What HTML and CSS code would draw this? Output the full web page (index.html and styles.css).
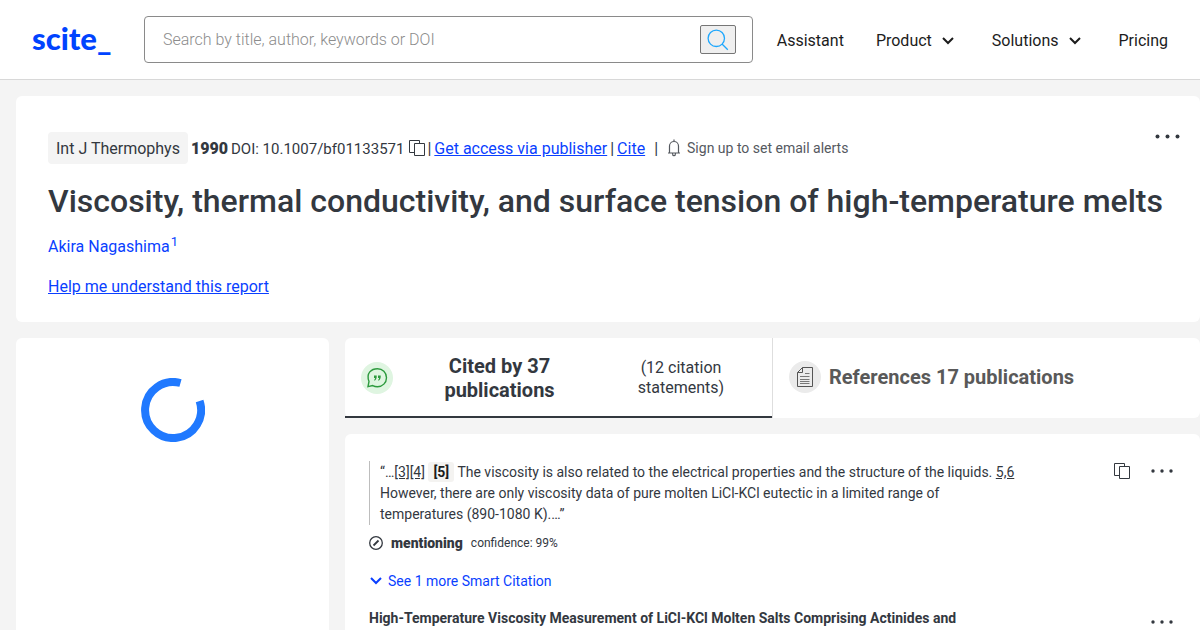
FILE: index.html
```html
<!DOCTYPE html>
<html lang="en">
<head>
    <meta charset="UTF-8">
    <meta name="viewport" content="width=device-width, initial-scale=1.0">
    <title>Viscosity, thermal conductivity, and surface tension of high-temperature melts - scite</title>
    <link rel="stylesheet" href="styles.css">
</head>
<body>
    <header class="header">
        <a class="logo" href="#">scite_</a>
        <form class="search">
            <input class="search-input" type="text" aria-label="Search" placeholder="Search by title, author, keywords or DOI">
            <button class="search-button" type="submit" aria-label="Search">
                <svg width="22" height="22" viewBox="0 0 22 22" fill="none" stroke="#1ea7fd" stroke-width="1.3">
                    <circle cx="9.3" cy="9.3" r="8.2"/>
                    <path d="M15 15l5.800 5.800"/>
                </svg>
            </button>
        </form>
        <nav class="nav">
            <a href="#">Assistant</a>
            <button type="button">Product
                <svg width="12" height="8" viewBox="0 0 12 8" fill="none" stroke="currentColor" stroke-width="2"><path d="M1 1l5 5 5-5"/></svg>
            </button>
            <button type="button">Solutions
                <svg width="12" height="8" viewBox="0 0 12 8" fill="none" stroke="currentColor" stroke-width="2"><path d="M1 1l5 5 5-5"/></svg>
            </button>
            <a href="#">Pricing</a>
        </nav>
    </header>

    <main class="page">
        <section class="card report">
            <div class="report-top">
                <div class="meta">
                    <span class="journal">Int J Thermophys</span>
                    <strong>1990</strong>
                    <span class="doi">DOI: 10.1007/bf01133571</span>
                    <button class="icon-button copy-doi" type="button" aria-label="Copy DOI">
                        <svg width="17" height="16" viewBox="0 0 17 16" fill="none" stroke="currentColor"><path d="M5.500 12.500H.5V.5h10v3"/><path d="M5.500 3.500h10v12h-10z" fill="#fff"/></svg>
                    </button>
                    <span>|</span>
                    <a href="#">Get access via publisher</a>
                    <span>|</span>
                    <a href="#">Cite</a>
                    <span class="divider">|</span>
                    <button class="alerts" type="button">
                        <svg width="14" height="18" viewBox="0 0 14 18" fill="none" stroke="currentColor" stroke-width="1.2"><path d="M1 14h12M2.500 14V7a4.500 4.500 0 0 1 9 0v7M7 2.500V.5M5.500 14.500c0 2.800 3 2.800 3 0"/></svg>
                        Sign up to set email alerts
                    </button>
                </div>
                <button class="icon-button" type="button" aria-label="More options">
                    <svg width="25" height="5" viewBox="0 0 25 5" fill="currentColor"><circle cx="2.500" cy="2.500" r="2"/><circle cx="12.500" cy="2.500" r="2"/><circle cx="22.500" cy="2.500" r="2"/></svg>
                </button>
            </div>
            <h1>Viscosity, thermal conductivity, and surface tension of high-temperature melts</h1>
            <p class="authors"><a href="#">Akira Nagashima<sup>1</sup></a></p>
            <a href="#">Help me understand this report</a>
        </section>

        <div class="columns">
            <aside class="card sidebar">
                <svg width="64" height="64" viewBox="0 0 64 64" fill="none" stroke="#2079ff" stroke-width="8" role="img" aria-label="Loading"><path d="M39.500 5A28 28 0 1 0 58.600 23"/></svg>
            </aside>

            <div class="content">
                <div class="card tabs">
                    <button class="tab active" type="button">
                        <svg width="32" height="32" viewBox="0 0 32 32" fill="none">
                            <circle cx="16" cy="16" r="16" fill="#dff5e1"/>
                            <path d="M8 19.500C4.800 11 10.500 6.700 16.500 6.700c5 0 9 4 9 9s-4 9.100-9 9.100c-2 0-3.500-.5-4.800-1.200L7 24.600z" stroke="#2d9a3e" stroke-width="1.400"/>
                            <path d="M13 13.500h2.700c.2 2.500-.3 4-2 5.200l-.6-.8c.7-.6 1-1.200 1-1.900H13zM17 13.500h2.700c.2 2.500-.3 4-2 5.200l-.6-.8c.7-.6 1-1.200 1-1.900H17z" fill="#2d9a3e"/>
                        </svg>
                        <span class="tab-title">Cited by 37 publications</span>
                        <span class="tab-note">(12 citation statements)</span>
                    </button>
                    <button class="tab references" type="button">
                        <svg width="32" height="32" viewBox="0 0 32 32" fill="none">
                            <circle cx="16" cy="16" r="16" fill="#ebebeb"/>
                            <path d="M13.500 6.500h10v19h-15v-14zM13.500 6.500v5h-5" stroke="#555"/>
                            <path d="M16 12.500h4.500M11 15.500h9.500M11 18.500h9.500M11 20.500h9.500M11 22.500h9.500" stroke="#777"/>
                        </svg>
                        <span class="tab-title">References 17 publications</span>
                    </button>
                </div>

                <section class="card citations">
                    <article class="citation">
                        <div>
                            <blockquote>“…<a href="#">[3]</a><a href="#">[4]</a> <strong class="ref">[5]</strong> The viscosity is also related to the electrical properties and the structure of the liquids. <a href="#">5,6</a> However, there are only viscosity data of pure molten LiCl-KCl eutectic in a limited range of temperatures (890-1080 K).…”</blockquote>
                            <div class="tally">
                                <svg width="14" height="14" viewBox="0 0 14 14" fill="none" stroke="currentColor" stroke-width="1.300"><circle cx="7" cy="7" r="6.300"/><path d="M4.500 9.500l5-5" stroke-width="1.800"/></svg>
                                <strong>mentioning</strong>
                                <span>confidence: 99%</span>
                            </div>
                            <button class="see-more" type="button">
                                <svg width="14" height="8" viewBox="0 0 14 8" fill="none" stroke="currentColor" stroke-width="2"><path d="M2 1l5 5 5-5"/></svg>
                                See 1 more Smart Citation
                            </button>
                        </div>
                        <div class="actions">
                            <button class="icon-button" type="button" aria-label="Copy citation">
                                <svg width="17" height="16" viewBox="0 0 17 16" fill="none" stroke="currentColor"><path d="M5.500 12.500H.5V.5h10v3"/><path d="M5.500 3.500h10v12h-10z" fill="#fff"/></svg>
                            </button>
                            <button class="icon-button" type="button" aria-label="More options">
                                <svg width="22" height="4" viewBox="0 0 22 4" fill="currentColor"><circle cx="2" cy="2" r="1.700"/><circle cx="11" cy="2" r="1.700"/><circle cx="20" cy="2" r="1.700"/></svg>
                            </button>
                        </div>
                    </article>
                    <article class="citation paper">
                        <h2>High-Temperature Viscosity Measurement of LiCl-KCl Molten Salts Comprising Actinides and</h2>
                        <div class="actions">
                            <button class="icon-button" type="button" aria-label="More options">
                                <svg width="22" height="4" viewBox="0 0 22 4" fill="currentColor"><circle cx="2" cy="2" r="1.700"/><circle cx="11" cy="2" r="1.700"/><circle cx="20" cy="2" r="1.700"/></svg>
                            </button>
                        </div>
                    </article>
                </section>
            </div>
        </div>
    </main>
</body>
</html>
```
FILE: styles.css
```css
* {
    box-sizing: border-box;
}

body {
    margin: 0;
    background-color: #f4f4f4;
    color: #33383f;
    font-family: Roboto, "Liberation Sans", sans-serif;
    font-size: 16px;
    line-height: 24px;
}

button {
    padding: 0;
    border: none;
    background: none;
    color: inherit;
    font: inherit;
    cursor: pointer;
}

svg {
    display: block;
    flex-shrink: 0;
}

a {
    color: #0a3fff;
}

.header {
    display: flex;
    align-items: center;
    gap: 24px;
    height: 80px;
    padding: 0 32px;
    background-color: white;
    border-bottom: 1px solid #d8d8d8;
}

.logo {
    width: 88px;
    padding-bottom: 4px;
    color: #0043ff;
    font-family: Lato, sans-serif;
    font-size: 31px;
    font-weight: 900;
    text-decoration: none;
}

.search {
    flex: 1;
    display: flex;
    align-items: center;
    height: 47px;
    padding: 0 16px 0 18px;
    border: 1px solid #8a8a8a;
    border-radius: 4px;
}

.search-input {
    flex: 1;
    min-width: 0;
    padding: 0;
    border: none;
    outline: none;
    font: inherit;
    font-weight: 300;
}

.search-input::placeholder {
    color: #8c8c8c;
}

.search-button {
    display: flex;
    align-items: center;
    justify-content: center;
    width: 36px;
    height: 29px;
    border: 1px solid #767676;
    border-radius: 2px;
    background-color: #efefef;
}

.nav {
    display: flex;
    gap: 32px;
    padding-top: 2px;
    color: #1c1c1c;
}

.nav a {
    color: inherit;
    text-decoration: none;
}

.nav button {
    display: flex;
    align-items: center;
    gap: 10px;
    padding-right: 6px;
}

.page {
    display: flex;
    flex-direction: column;
    gap: 16px;
    padding: 16px 0 0 16px;
}

.card {
    background-color: white;
    border-radius: 6px;
}

.report {
    padding: 36px 20px 23px 32px;
}

.report-top {
    display: flex;
    justify-content: space-between;
}

.icon-button {
    display: flex;
    align-items: center;
    height: 8px;
}

.meta {
    display: flex;
    align-items: baseline;
    gap: 3px;
}

.meta strong {
    font-weight: 900;
}

.journal {
    padding: 5px 8px 3px;
    border-radius: 4px;
    background-color: #f4f4f4;
}

.doi {
    font-size: 15px;
}

.copy-doi {
    align-self: center;
    margin: 0 -2px 0 2px;
}

.divider {
    margin: 0 6px;
}

.alerts {
    display: flex;
    align-items: center;
    align-self: center;
    gap: 6px;
    color: #55595f;
    font-size: 14px;
}

h1 {
    margin: 16px 0 13px;
    font-size: 32px;
    font-weight: 500;
    line-height: 42px;
}

.authors {
    margin: 0 0 16px;
}

.authors a {
    text-decoration: none;
}

sup {
    margin-left: 1px;
    font-size: 13px;
    line-height: 0;
}

.columns {
    display: grid;
    grid-template-columns: 313px 1fr;
    gap: 16px;
}

.sidebar {
    display: flex;
    justify-content: center;
    padding-top: 40px;
}

.content {
    display: flex;
    flex-direction: column;
    gap: 16px;
}

.tabs {
    display: flex;
    height: 80px;
}

.tab {
    flex: 1;
    display: flex;
    align-items: center;
    gap: 8px;
    padding: 0 16px;
}

.tab.active {
    box-shadow: inset 0 -2px #33383f;
}

.references {
    padding-bottom: 2px;
    border-left: 1px solid #dedede;
    color: #595959;
}

.tab-title {
    font-size: 20px;
    font-weight: 700;
}

.active .tab-title {
    flex: 1;
    padding: 0 40px;
}

.tab-note {
    width: 150px;
    padding: 0 16px;
    line-height: 20px;
}

.citations {
    display: flex;
    flex-direction: column;
    gap: 13px;
    padding: 27px 27px 24px 24px;
}

.citation {
    display: flex;
    justify-content: space-between;
    gap: 80px;
}

blockquote {
    max-width: 650px;
    margin: 0;
    padding: 1px 0 0 10px;
    border-left: 1px solid #bdbdbd;
    font-size: 14px;
    line-height: 21px;
}

blockquote a {
    color: inherit;
}

.ref {
    padding: 2px 5px;
    border-radius: 3px;
    background-color: #f4f3f1;
    color: #1c1c1c;
}

.tally {
    display: flex;
    align-items: center;
    gap: 8px;
    margin: 6px 0 14px;
    font-size: 12px;
}

.tally strong {
    font-size: 14px;
    font-weight: 900;
}

.see-more {
    display: flex;
    align-items: center;
    gap: 5px;
    color: #0a3fff;
    font-size: 14px;
}

.actions {
    display: flex;
    gap: 20px;
    padding-top: 6px;
}

.paper {
    align-items: center;
}

.paper .actions {
    padding-top: 8px;
}

h2 {
    margin: 0;
    font-size: 14px;
    font-weight: 700;
    line-height: 24px;
}
```
